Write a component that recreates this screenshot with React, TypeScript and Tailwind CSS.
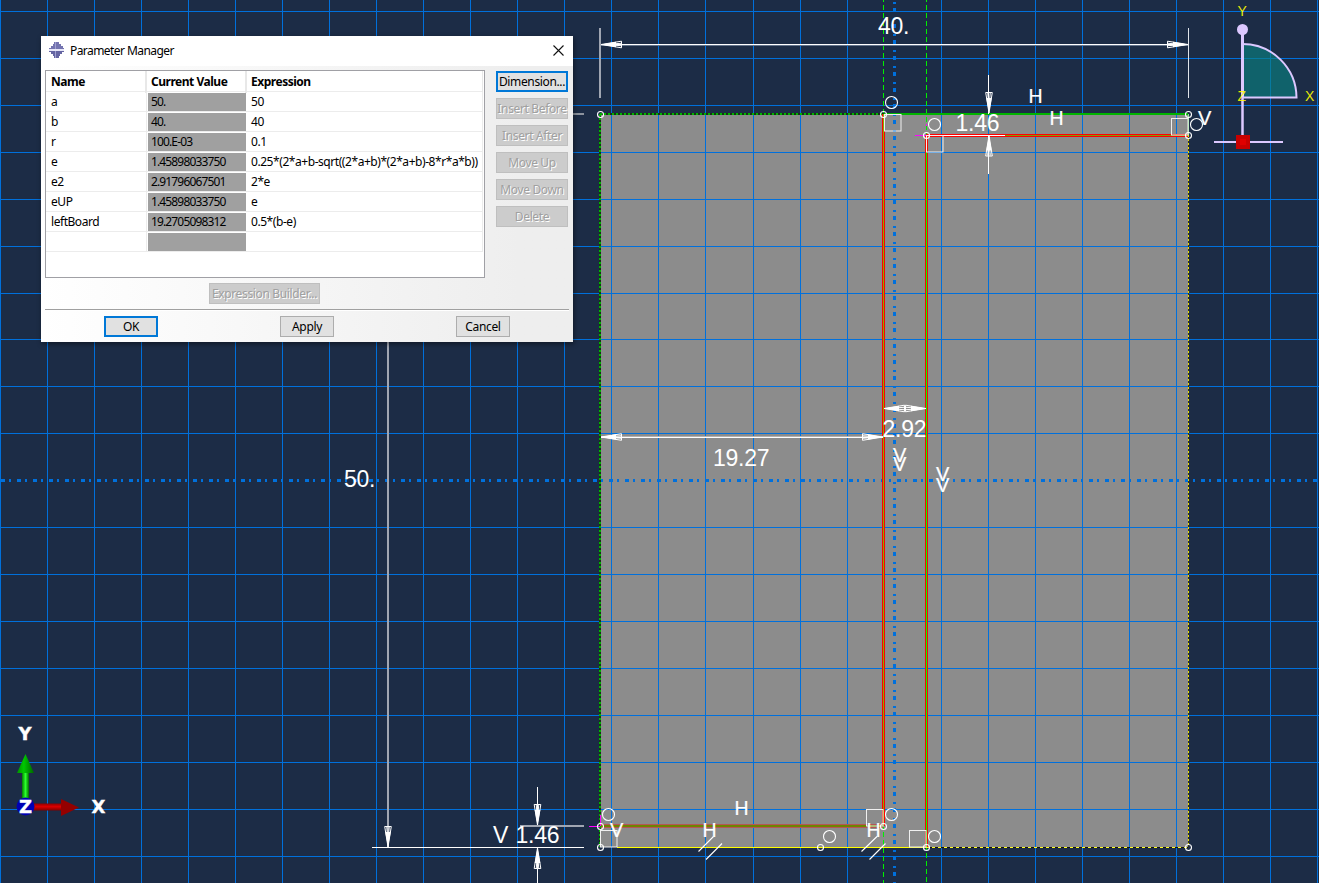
import React from "react";

const gridX = [0, 47, 94, 141, 188, 235, 282, 329, 376, 423, 470, 517, 564, 611, 658, 705, 753, 800, 847, 941, 988, 1035, 1082, 1129, 1176, 1223, 1270, 1317];
const gridY = [11, 58, 105, 152, 199, 246, 293, 339, 386, 433, 527, 574, 621, 668, 715, 762, 809, 856];

const vertices = [
  [600, 114], [883, 114], [926, 135], [1188, 114], [1188, 135], [600, 826],
  [600, 847], [820, 847], [883, 826], [926, 847], [1188, 847],
];
const coincident = [
  [891, 102], [934, 124], [1196, 124], [608, 814], [829, 836], [891, 814], [934, 836],
];
const squares = [
  [884, 114], [926, 135], [1171, 118], [866, 809], [909, 830], [600, 830],
];
const dimensions: [number, number, string][] = [
  [878, 34, "40."], [955.5, 131, "1.46"], [882.5, 437, "2.92"], [713, 466, "19.27"],
  [344, 487, "50."], [515.5, 843, "1.46"], [493, 843, "V"],
];
const marks: [number, number, string][] = [
  [1028.5, 103, "H"], [1049.5, 125, "H"], [1198, 125, "V"], [734.5, 815, "H"], [702.5, 837, "H"],
  [866.5, 837, "H"], [610, 837, "V"], [893, 462, "V"], [893, 471, "V"], [936, 481, "V"], [936, 492, "V"],
];

function Arrow({ x, y, angle }: { x: number; y: number; angle: number }) {
  return (
    <g transform={`translate(${x} ${y}) rotate(${angle})`} stroke="#fff" fill="none">
      <path d="M0 0L20.5-3.3V3.3Z" />
      <path d="M0 0L15-2.8V2.8Z" fill="#fff" stroke="none" />
      <path d="M3 0L20-1.2M3 0L20 1.2" />
    </g>
  );
}

function Sketch() {
  return (
    <svg width="1319" height="883" viewBox="0 0 1319 883" className="block">
      <defs>
        <linearGradient id="greenShaft">
          <stop offset="0" stopColor="#008000" />
          <stop offset=".5" stopColor="#2cff2c" />
          <stop offset="1" stopColor="#006c00" />
        </linearGradient>
        <linearGradient id="greenCone">
          <stop offset="0" stopColor="#009000" />
          <stop offset=".4" stopColor="#00c800" />
          <stop offset="1" stopColor="#006400" />
        </linearGradient>
        <linearGradient id="redShaft" x2="0" y2="1">
          <stop offset="0" stopColor="#900000" />
          <stop offset=".45" stopColor="#dc0000" />
          <stop offset="1" stopColor="#800000" />
        </linearGradient>
      </defs>
      <rect width="1319" height="883" fill="#1c2c46" />
      <rect x="601" y="114" width="588" height="733" fill="#8c8c8c" />
      <g fill="#0070dc" shapeRendering="crispEdges">
        {gridX.map((x) => <rect key={x} x={x} y="0" width="1" height="883" />)}
        {gridY.map((y) => <rect key={y} x="0" y={y} width="1319" height="1" />)}
      </g>
      <g stroke="#0070dc" strokeWidth="3" shapeRendering="crispEdges">
        <path d="M1 480.5H1319" strokeDasharray="4 4 2 6" />
        <path d="M894.5-8V883" strokeDasharray="4 6 2 4" />
      </g>

      <g shapeRendering="crispEdges" fill="none">
        <path d="M883.5 0V114M926.5 0V135M883.5 827V883M926.5 848V883" stroke="#00f000" strokeDasharray="5 3" strokeDashoffset="3" />
        <path d="M600 114H884M600 114V847" stroke="#173017" strokeWidth="2" />
        <path d="M600 114H884M600 114V847" stroke="#00b400" strokeWidth="2" strokeDasharray="2 2" />
        <path d="M884 114H1188" stroke="#00b400" strokeWidth="2" />
        <path d="M1188.5 114V135" stroke="#90e890" />
        <path d="M1188.5 135V847" stroke="#303018" />
        <path d="M1188.5 135V847" stroke="#f0e000" strokeDasharray="2 2" />
        <path d="M617 847.5H926" stroke="#ffff00" />
        <path d="M926 847.5H1188" stroke="#101010" />
        <path d="M926 847.5H1188" stroke="#ffff20" strokeDasharray="3 3" />
        <path d="M883.5 114V826" stroke="#ff0000" strokeWidth="3" />
        <path d="M883.5 114V826" stroke="#80b000" />
        <path d="M926.5 135V847" stroke="#f01000" strokeWidth="3" />
        <path d="M926.5 135V847" stroke="#00ff00" />
        <path d="M926 135.5H1188" stroke="#ff0000" strokeWidth="3" />
        <path d="M1005 135.5H1188" stroke="#80a000" />
        <path d="M926 135.5H1005" stroke="#fff" />
        <path d="M601 826H883" stroke="#b65555" strokeWidth="4" />
        <path d="M601 826H883" stroke="#6d8500" strokeWidth="2" />
        <path d="M915 135.5H926M926.5 124V126M589 826.5H600M600.5 815V826" stroke="#ff00ff" />
      </g>

      <g stroke="#fff" fill="none" shapeRendering="crispEdges">
        <path d="M601 44.5H1188M372 847.5H584M537.5 787V826M537.5 848V883M988.5 75V114M988.5 135V174" />
        <path d="M601 45.5H1188" stroke="#64748b" />
        <path d="M600 28V98M388 342V847M520 826H584" strokeWidth="2" stroke="#a0a6b2" />
        <path d="M573 114H584" strokeWidth="2" stroke="#8c939e" />
        <path d="M1188.5 28V98" stroke="#e0e4ea" />
        <path d="M601 437.5H883" />
        <path d="M601 436.5H883" stroke="#b2b2b2" />
      </g>
      <Arrow x={601} y={44.5} angle={0} />
      <Arrow x={1188} y={44.5} angle={180} />
      <Arrow x={601} y={437} angle={0} />
      <Arrow x={883} y={437} angle={180} />
      <Arrow x={884} y={408.5} angle={0} />
      <Arrow x={926} y={408.5} angle={180} />
      <Arrow x={989} y={113} angle={-90} />
      <Arrow x={989} y={135.5} angle={90} />
      <Arrow x={537.5} y={825} angle={-90} />
      <Arrow x={537.5} y={848} angle={90} />
      <Arrow x={388} y={847} angle={-90} />

      <g fill="none" stroke="#f0f0f0">
        {squares.map(([x, y], i) => <rect key={i} x={x + 0.5} y={y + 0.5} width="16.5" height="16.5" />)}
      </g>
      <g fill="none" stroke="#fff" strokeWidth="1.1">
        {coincident.map(([x, y], i) => <circle key={i} cx={x + 0.5} cy={y + 0.5} r="6" />)}
        {vertices.map(([x, y], i) => <circle key={i} cx={x + 0.5} cy={y + 0.5} r="3" />)}
        <path d="M698.5 851.5L713.5 836.5M706 859.5L722 843.5M861.5 851.5L877 836.5M869.5 859.5L885.5 843.5" />
      </g>
      <g fill="#fff" fontFamily="'Liberation Sans', Arial, sans-serif" fontSize="23" letterSpacing="-.25">
        {dimensions.map(([x, y, t], i) => <text key={i} x={x} y={y}>{t}</text>)}
      </g>
      <g fill="#fff" stroke="#fff" strokeWidth=".2" fontFamily="'Liberation Sans', Arial, sans-serif">
        {marks.map(([x, y, t], i) => <text key={i} x={x} y={y} fontSize={t === "V" ? 20 : 19.5}>{t}</text>)}
      </g>

      <path d="M1242.5 97.5V44A54 54 0 0 1 1296.5 97.5Z" fill="#0b7f80" fillOpacity=".65" />
      <g stroke="#dcc8ff" fill="none" strokeWidth="2">
        <path d="M1242.5 44A54 54 0 0 1 1296.5 97.5H1242" />
        <path d="M1242.5 33V97" strokeWidth="3" />
        <path d="M1242.5 97V142" strokeWidth="2.5" />
        <path d="M1214 142H1283" />
      </g>
      <circle cx="1242.5" cy="29.5" r="5.5" fill="#dcc8ff" />
      <rect x="1236" y="135" width="14" height="14" fill="#c80000" />
      <rect x="1240" y="139" width="6" height="6" fill="#e00000" />
      <g fill="#ffff00" fillOpacity=".9" fontFamily="'Liberation Sans', Arial, sans-serif" fontSize="14">
        <text x="1237.5" y="15.5">Y</text>
        <text x="1305" y="101">X</text>
        <text x="1237.5" y="101">Z</text>
      </g>

      <rect x="22" y="772" width="7" height="30" fill="url(#greenShaft)" />
      <path d="M25.5 754L34 773H17Z" fill="url(#greenCone)" />
      <rect x="32" y="803.5" width="30" height="7" fill="url(#redShaft)" />
      <path d="M79 807.5L61 799V816Z" fill="#940000" />
      <circle cx="25.5" cy="806.5" r="9" fill="#0000b4" />
      <g fill="#fff" stroke="#fff" strokeWidth=".4" fontFamily="'DejaVu Sans', sans-serif" fontWeight="700" fontSize="18">
        <text x="18.5" y="739.5">Y</text>
        <text x="91.5" y="812.5">X</text>
        <text x="19" y="812.5">Z</text>
      </g>
    </svg>
  );
}

const rows = [
  ["a", "50.", "50"],
  ["b", "40.", "40"],
  ["r", "100.E-03", "0.1"],
  ["e", "1.45898033750", "0.25*(2*a+b-sqrt((2*a+b)*(2*a+b)-8*r*a*b))"],
  ["e2", "2.91796067501", "2*e"],
  ["eUP", "1.45898033750", "e"],
  ["leftBoard", "19.2705098312", "0.5*(b-e)"],
  ["", "", ""],
];

const disabled = "border border-[#bfbfbf] bg-[#cccccc] text-[#a0a0a0] [text-shadow:1px_1px_0_#fff]";

function Button({ label, className }: { label: string; className: string }) {
  return (
    <button className={`flex h-[21px] shrink-0 items-center justify-center whitespace-nowrap ${className}`}>
      <span>{label}</span>
    </button>
  );
}

function ParameterManager() {
  return (
    <div className="absolute left-[41px] top-[36px] flex h-[306px] w-[532px] flex-col bg-linear-to-r from-white to-[#eeeeee] to-90% font-['Noto_Sans',sans-serif] text-[12px] leading-[19px] tracking-[-0.35px] text-black shadow-[1px_2px_5px_rgba(0,0,0,0.45)]">
      <div className="flex h-[30px] shrink-0 items-center bg-white pb-[2px] pl-2 pr-[9px]">
        <svg width="16" height="18" viewBox="0 0 16 18">
          <path d="M5 1H10V3H12V5H14V7H15V8H0V7H2V5H4V3H5Z" fill="#7474b0" />
          <path d="M0 10H15V11H13V13H11V15H10V17H5V15H4V13H2V11H0Z" fill="#6565a2" />
          <path d="M0 8H15V10H0Z" fill="#e8e8f8" />
          <path d="M6.500 1V8M6.500 10V17" stroke="#a0a0d0" />
        </svg>
        <span className="ml-[5px] grow tracking-[-0.57px]">Parameter Manager</span>
        <svg width="11" height="11" viewBox="0 0 11 11">
          <path d="M.5.5L10.500 10.500M10.500.5L.5 10.500" stroke="#111" strokeWidth="1.1" />
        </svg>
      </div>
      <div className="flex shrink-0 gap-[11px] pl-1 pt-[4px]">
        <div className="h-[208px] w-[440px] border border-[#a0a0a5] bg-white">
          <div className="grid h-[21px] w-[437px] grid-cols-[101px_100px_1fr] border-b border-[#ececec] font-bold leading-[22px] tracking-[-0.48px]">
            <div className="border-r-2 border-[#e8e8e8] pl-[5px]">Name</div>
            <div className="border-r-2 border-[#e8e8e8] pl-[4px]">Current Value</div>
            <div className="border-r border-[#e8e8e8] pl-[4px]">Expression</div>
          </div>
          {rows.map(([name, value, expression], i) => (
            <div key={i} className="grid h-[20px] w-[437px] grid-cols-[101px_100px_1fr] border-b border-[#ececec]">
              <div className="border-r border-[#ececec] pl-[5px] tracking-[-0.45px]">{name}</div>
              <div className="ml-[1px] mr-[1px] mt-[1px] h-[18px] bg-[#a0a0a0] pl-[3px] leading-[17px] tracking-[-0.86px]">{value}</div>
              <div className="whitespace-nowrap border-r border-[#ececec] pl-[4px] tracking-[-0.44px]">{expression}</div>
            </div>
          ))}
        </div>
        <div className="flex w-[72px] flex-col gap-[6px] pt-[1px]">
          <Button label="Dimension..." className="border-2 border-[#0078d7] bg-[#e1e1e1]" />
          <Button label="Insert Before" className={disabled} />
          <Button label="Insert After" className={disabled} />
          <Button label="Move Up" className={disabled} />
          <Button label="Move Down" className={disabled} />
          <Button label="Delete" className={disabled} />
        </div>
      </div>
      <div className="mx-1 flex h-[32px] shrink-0 justify-center border-b border-[#a0a0a0] pr-[85px] pt-[5px] shadow-[0_1px_0_#fff]">
        <Button label="Expression Builder..." className={`w-[111px] ${disabled}`} />
      </div>
      <div className="flex gap-[122px] pl-[63px] pt-[6px]">
        <Button label="OK" className="w-[54px] border-2 border-[#0078d7] bg-[#e1e1e1]" />
        <Button label="Apply" className="w-[54px] border border-[#adadad] bg-[#e1e1e1]" />
        <Button label="Cancel" className="w-[54px] border border-[#adadad] bg-[#e1e1e1]" />
      </div>
    </div>
  );
}

export default function App() {
  return (
    <main className="relative h-[883px] w-[1319px] overflow-hidden bg-[#1c2c46]">
      <Sketch />
      <ParameterManager />
    </main>
  );
}
